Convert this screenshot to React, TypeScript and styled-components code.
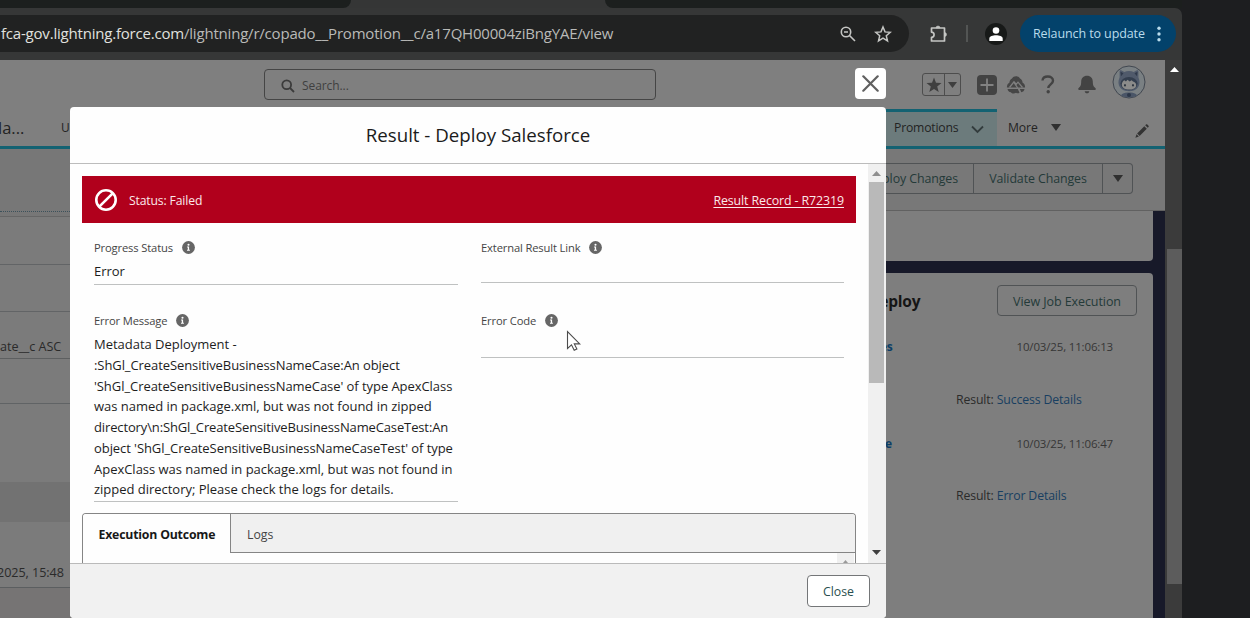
import React from "react";
import styled, { createGlobalStyle, css } from "styled-components";

const GlobalStyle = createGlobalStyle`
  * { box-sizing: border-box; }
  body { margin: 0; background: #1d1e20; font-family: "Open Sans", "Noto Sans", sans-serif; overflow: hidden; }
`;

const type = (size: number, spacing: number, line: number) => css`
  font-size: ${size}px;
  letter-spacing: ${spacing}px;
  line-height: ${line}px;
  white-space: pre;
`;

/* ---------- browser frame ---------- */
const Desktop = styled.div`
  position: relative;
  width: 1250px;
  height: 618px;
  overflow: hidden;
  background: #1d1e20;
`;
const BrowserWindow = styled.div`
  width: 1182px;
  height: 618px;
  display: flex;
  flex-direction: column;
`;
const TabStrip = styled.div`
  height: 8px;
  display: flex;
  justify-content: space-between;
  background: #353636;
`;
const InactiveTabs = styled.div<{ $width: number; $side: "left" | "right" }>`
  width: ${(p) => p.$width}px;
  height: 8px;
  background: #1c1f1e;
  border-radius: ${(p) => (p.$side === "left" ? "0 0 9px 0" : "0 0 0 9px")};
`;
const Toolbar = styled.div`
  height: 52px;
  padding-bottom: 1px;
  display: flex;
  align-items: center;
  background: #363737;
  border-radius: 0 7px 0 0;
`;
const AddressBar = styled.div`
  width: 909px;
  height: 37px;
  padding: 0 17px 0 1px;
  display: flex;
  align-items: center;
  background: #212222;
  border-radius: 0 19px 19px 0;
  svg { display: block; }
`;
const Url = styled.div`
  flex: 1;
  padding-bottom: 2px;
  ${type(15, -0.2, 20)}
  color: #b9bab8;
  b { font-weight: 400; color: #e0e1df; }
`;
const AddressIcons = styled.div`
  display: flex;
  gap: 17px;
`;
const ToolbarTail = styled.div`
  flex: 1;
  display: flex;
  align-items: center;
  padding-left: 19px;
  svg { display: block; }
`;
const Divider = styled.div`
  width: 2px;
  height: 17px;
  margin: 0 17px;
  background: #535554;
`;
const ProfileButton = styled.div`
  width: 22px;
  height: 22px;
  margin-right: 13px;
  border-radius: 50%;
  background: #171918;
`;
const RelaunchButton = styled.div`
  width: 156px;
  height: 37px;
  padding: 0 15px 0 13px;
  display: flex;
  align-items: center;
  justify-content: space-between;
  border-radius: 19px;
  background: #03426b;
  color: #b9dcec;
  ${type(12.5, -0.1, 18)}
`;

/* ---------- page behind the dialog ---------- */
const Viewport = styled.div`
  flex: 1;
  min-height: 0;
  display: flex;
`;
const Page = styled.div`
  width: 1165px;
  display: flex;
  flex-direction: column;
  background: #7f7f7f;
`;
const WindowScrollbar = styled.div`
  width: 17px;
  display: flex;
  flex-direction: column;
  align-items: center;
  background: #3b3b3b;
`;
const ScrollTop = styled.div`
  height: 189px;
  padding: 7px 0 0 1px;
  svg { display: block; }
`;
const ScrollThumb = styled.div`
  width: 15px;
  height: 335px;
  margin-left: 1px;
  background: #5c5c5c;
`;
const Header = styled.div`
  height: 49px;
  display: flex;
  padding-left: 264px;
`;
const SearchBox = styled.div`
  width: 392px;
  height: 31px;
  margin-top: 9px;
  padding: 2px 0 0 16px;
  display: flex;
  align-items: center;
  gap: 7px;
  border: 1px solid #454545;
  border-radius: 4px;
  color: #3f3f3f;
  ${type(12, -0.08, 18)}
`;
const HeaderActions = styled.div`
  display: flex;
  align-items: center;
  margin-left: 266px;
  svg { display: block; flex: none; }
`;
const FavoriteGroup = styled.div`
  display: flex;
  width: 39px;
  height: 23px;
  margin-right: 16px;
  border: 1px solid #4d4d4d;
  border-radius: 3px;
`;
const FavoriteCell = styled.div<{ $divider?: boolean }>`
  flex: ${(p) => (p.$divider ? "0 0 22px" : "1")};
  display: flex;
  align-items: center;
  justify-content: center;
  padding-top: 1px;
  border-right: ${(p) => (p.$divider ? "1px solid #4d4d4d" : "0")};
`;
const IconSlot = styled.div<{ $width: number }>`
  width: ${(p) => p.$width}px;
`;
const AvatarSlot = styled.div`
  padding: 0 0 5px 0;
`;
const NavBar = styled.div`
  height: 40px;
  display: flex;
  align-items: stretch;
  border-bottom: 3px solid #136272;
  color: #232323;
`;
const AppName = styled.div`
  width: 61px;
  padding-top: 7px;
  margin-left: -2px;
  margin-right: 2px;
  ${type(16.5, 0, 24)}
`;
const NavItem = styled.div<{ $width: number }>`
  width: ${(p) => p.$width}px;
  padding-top: 10px;
  ${type(12, 0, 18)}
`;
const ActiveNavItem = styled.div`
  width: 117px;
  padding: 7px 13px 0 14px;
  display: flex;
  justify-content: space-between;
  border-top: 3px solid #136272;
  background: #6c7b7c;
  ${type(12.2, -0.2, 18)}
  svg { margin-top: 6px; }
`;
const MoreItem = styled.div`
  flex: 1;
  display: flex;
  gap: 13px;
  padding: 10px 0 0 11px;
  ${type(12.2, -0.1, 18)}
  svg { margin-top: 5px; }
`;
const EditNav = styled.div`
  padding: 12px 16px 0 0;
`;
const Columns = styled.div`
  flex: 1;
  display: flex;
  min-height: 0;
`;
const ListColumn = styled.div`
  width: 880px;
  display: flex;
  flex-direction: column;
`;
const ListRow = styled.div<{ $height: number; $tone?: string; $line?: string; $dotted?: boolean; $pad?: number }>`
  flex: none;
  height: ${(p) => p.$height}px;
  display: flex;
  align-items: center;
  padding-top: ${(p) => p.$pad ?? 0}px;
  background: ${(p) => p.$tone ?? "#7b7b7b"};
  border-bottom: ${(p) => (p.$line ? `1px ${p.$dotted ? "dotted" : "solid"} ${p.$line}` : "0")};
  color: #2a2a2a;
  ${type(12.6, -0.05, 18)}
`;
const Clipped = styled.span`
  margin-left: -3px;
`;
const DetailColumn = styled.div`
  width: 285px;
  display: flex;
  flex-direction: column;
  background: #171929;
`;
const ActionBar = styled.div`
  height: 62px;
  padding-top: 14px;
  background: #787878;
  border-bottom: 1px solid #616161;
`;
const ButtonGroup = styled.div`
  width: 253px;
  height: 31px;
  display: flex;
  border: 1px solid #505355;
  border-left: 0;
  border-radius: 0 4px 4px 0;
`;
const GroupButton = styled.div<{ $width?: number; $end?: boolean }>`
  width: ${(p) => (p.$width ? `${p.$width}px` : "auto")};
  flex: ${(p) => (p.$width ? "none" : "1")};
  display: flex;
  align-items: center;
  justify-content: ${(p) => (p.$end ? "flex-end" : "center")};
  padding-right: ${(p) => (p.$end ? 15 : 0)}px;
  border-right: ${(p) => (p.$width ? "1px solid #505355" : "0")};
  color: #243a39;
  ${type(12.4, -0.1, 18)}
`;
const TopCard = styled.div`
  width: 273px;
  height: 50px;
  margin-bottom: 12px;
  border-radius: 0 0 4px 0;
  background: #7e7e7e;
`;
const JobCard = styled.div`
  width: 273px;
  flex: 1;
  padding: 12px 16px 0 0;
  border-radius: 0 4px 0 0;
  background: #7e7e7e;
`;
const JobHeader = styled.div`
  display: flex;
  justify-content: space-between;
  align-items: center;
`;
const JobTitle = styled.div`
  margin-left: -12px;
  padding-top: 1px;
  font-weight: 700;
  color: #151515;
  ${type(15.5, -0.2, 22)}
`;
const JobButton = styled.div`
  width: 140px;
  height: 31px;
  padding-top: 2px;
  display: flex;
  align-items: center;
  justify-content: center;
  border: 1px solid #505355;
  border-radius: 4px;
  color: #243a39;
  ${type(12.5, -0.08, 18)}
`;
const StepRow = styled.div<{ $top: number }>`
  display: flex;
  justify-content: space-between;
  margin-top: ${(p) => p.$top}px;
  padding-right: 24px;
  color: #363636;
  ${type(11.5, -0.16, 18)}
`;
const StepName = styled.b`
  color: #0d3e66;
  ${type(12, -0.3, 18)}
`;
const ResultRow = styled.div<{ $top: number }>`
  margin-top: ${(p) => p.$top}px;
  padding-left: 76px;
  display: flex;
  color: #2b2b2b;
  ${type(12.3, -0.14, 18)}
  a { color: #183f61; }
`;

/* ---------- dialog ---------- */
const CloseIcon = styled.div`
  position: absolute;
  left: 855px;
  top: 68px;
  width: 31px;
  height: 31px;
  padding: 0 1px 1px 0;
  display: flex;
  align-items: center;
  justify-content: center;
  background: #fff;
  border-radius: 4px;
`;
const Dialog = styled.div`
  position: absolute;
  left: 70px;
  top: 107px;
  width: 816px;
  height: 511px;
  display: flex;
  flex-direction: column;
  border-radius: 4px;
  overflow: hidden;
  background: #fefefe;
`;
const DialogHeader = styled.div`
  flex: none;
  height: 57px;
  display: flex;
  align-items: center;
  justify-content: center;
  border-bottom: 1px solid #bcbcbc;
  color: #1b1b1b;
  ${type(18.7, 0, 28)}
`;
const DialogBody = styled.div`
  flex: none;
  height: 399px;
  display: flex;
`;
const BodyContent = styled.div`
  width: 798px;
  padding: 12px 12px 0;
  display: flex;
  flex-direction: column;
`;
const BodyScrollbar = styled.div`
  width: 18px;
  padding: 7px 0 8px;
  display: flex;
  flex-direction: column;
  align-items: center;
  background: #f0f0f0;
  svg { display: block; margin-right: 1px; }
`;
const BodyThumb = styled.div`
  width: 15px;
  height: 201px;
  margin: 6px 1px auto 0;
  background: #b9b9b9;
`;
const StatusBanner = styled.div`
  height: 47px;
  padding: 0 12px;
  display: flex;
  align-items: center;
  background: #b1001c;
  color: #fbe9ea;
  svg { display: block; margin-right: 11px; }
`;
const StatusText = styled.span`
  padding-top: 2px;
  ${type(12.2, -0.15, 18)}
`;
const ResultLink = styled.a`
  margin-left: auto;
  padding-top: 2px;
  text-decoration: underline;
  text-underline-offset: 2px;
  ${type(12.4, -0.11, 18)}
`;
const Fields = styled.div`
  display: grid;
  grid-template-columns: 364px 363px;
  column-gap: 23px;
  padding: 15px 12px 0;
`;
const Field = styled.div<{ $height: number; $gap?: number }>`
  height: ${(p) => p.$height}px;
  margin-bottom: ${(p) => p.$gap ?? 0}px;
  border-bottom: 1px solid #bfc1c1;
`;
const FieldLabel = styled.div`
  display: flex;
  align-items: center;
  gap: 9px;
  height: 18px;
  color: #454545;
  svg { display: block; }
`;
const LabelText = styled.span`
  padding-top: 2px;
  ${type(11.2, -0.14, 18)}
`;
const FieldValue = styled.div`
  margin-top: 5px;
  color: #1d1d1d;
  ${type(13, -0.02, 20.75)}
`;
const Line = styled.div<{ $spacing?: number }>`
  letter-spacing: ${(p) => p.$spacing ?? -0.02}px;
`;
const Tabs = styled.div`
  flex: 1;
  margin-top: 11px;
  display: flex;
  flex-direction: column;
  border: 1px solid #858585;
  border-bottom: 0;
  border-radius: 4px 4px 0 0;
  overflow: hidden;
`;
const TabList = styled.div`
  height: 39px;
  display: flex;
`;
const Tab = styled.div<{ $active?: boolean }>`
  width: ${(p) => (p.$active ? "148px" : "auto")};
  flex: ${(p) => (p.$active ? "none" : "1")};
  padding: 12px 15px 0 ${(p) => (p.$active ? 15.5 : 16)}px;
  background: ${(p) => (p.$active ? "#fefefe" : "#f0f0f0")};
  border-right: ${(p) => (p.$active ? "1px solid #858585" : "0")};
  border-bottom: ${(p) => (p.$active ? "0" : "1px solid #858585")};
  color: ${(p) => (p.$active ? "#181818" : "#444")};
  font-weight: ${(p) => (p.$active ? 700 : 400)};
  ${type(12.3, 0, 18)}
  letter-spacing: ${(p) => (p.$active ? -0.2 : 0)}px;
`;
const TabPanel = styled.div`
  flex: 1;
  display: flex;
  justify-content: flex-end;
  padding-right: 1px;
`;
const PanelScrollbar = styled.div`
  width: 17px;
  display: flex;
  justify-content: center;
  align-items: flex-end;
  background: #f0f0f0;
`;
const DialogFooter = styled.div`
  flex: 1;
  padding: 11px 16px;
  display: flex;
  justify-content: flex-end;
  border-top: 1px solid #bababa;
  background: #f1f1f1;
`;
const CloseButton = styled.div`
  width: 63px;
  height: 32px;
  padding-top: 1px;
  display: flex;
  align-items: center;
  justify-content: center;
  border: 1px solid #747678;
  border-radius: 4px;
  background: #fff;
  color: #2a4f50;
  ${type(12.3, 0, 18)}
`;
const Pointer = styled.svg`
  position: absolute;
  left: 565px;
  top: 329px;
`;

const Triangle = ({ w, h, color, up }: { w: number; h: number; color: string; up?: boolean }) => (
  <svg width={w} height={h} viewBox="0 0 10 5" preserveAspectRatio="none">
    <path d={up ? "M0 5 5 0l5 5z" : "M0 0h10L5 5z"} fill={color} />
  </svg>
);

const InfoIcon = () => (
  <svg width="13" height="13" viewBox="0 0 13 13">
    <circle cx="6.5" cy="6.5" r="6.4" fill="#666" />
    <circle cx="6.5" cy="3.7" r="1.05" fill="#fff" />
    <path d="M5.1 5.6h2v3.1h.8v1H5v-1h.8V6.6h-.7z" fill="#fff" />
  </svg>
);

const Avatar = () => (
  <svg width="34" height="34" viewBox="0 0 34 34">
    <defs>
      <clipPath id="face"><circle cx="17" cy="17" r="15.6" /></clipPath>
    </defs>
    <circle cx="17" cy="17" r="16" fill="#7a8083" stroke="#414750" strokeWidth="1" />
    <g clipPath="url(#face)">
      <path d="M7.600 6.200c0-1.500 1.600-1.200 4.600.8 3-1.200 6.600-1.200 9.600 0 3-2 4.600-2.300 4.600-.8v6c3.500 8-1.400 14-9.400 14S4.100 20.200 7.600 12.200z" fill="#505a6b" />
      <path d="M8.500 6.800l3 1.500-2.500 3zM25.500 6.800l-3 1.500 2.500 3z" fill="#303a4b" />
      <ellipse cx="17" cy="18.600" rx="8.600" ry="6.600" fill="#333e4e" />
      <path d="M9.800 19.500c.2-2.300 1.400-3.600 2.600-4.200l1.500 1.300 1.700-1.900 2 1.800 2-1.300 1.400 1.400c1.600.6 3.200 1.600 3.200 3.300 0 3.300-3.200 4.700-7.200 4.700s-7.200-1.700-7.200-5.100z" fill="#8b8b8a" />
      <ellipse cx="13" cy="20.300" rx=".9" ry="1.200" fill="#2c343f" />
      <ellipse cx="21" cy="20.300" rx=".9" ry="1.200" fill="#2c343f" />
      <path d="M8 34c0-4.500 3-6.500 9-6.500s9 2 9 6.500z" fill="#4a5567" />
      <circle cx="17" cy="30" r="2" fill="#2c3748" />
    </g>
  </svg>
);

export default function App() {
  return (
    <Desktop>
      <GlobalStyle />
      <BrowserWindow>
        <TabStrip>
          <InactiveTabs $width={351} $side="left" />
          <InactiveTabs $width={577} $side="right" />
        </TabStrip>
        <Toolbar>
          <AddressBar>
            <Url><b>fca-gov.lightning.force.com</b>/lightning/r/copado__Promotion__c/a17QH00004ziBngYAE/view</Url>
            <AddressIcons>
              <svg width="18" height="18" viewBox="0 0 18 18" fill="none" stroke="#c5c6c4" strokeWidth="1.6">
                <circle cx="7" cy="7" r="4.700" />
                <path d="M10.500 10.500l5.500 5.500M5 7h4" />
              </svg>
              <svg width="18" height="18" viewBox="0 0 18 18" fill="none" stroke="#c5c6c4" strokeWidth="1.500">
                <path d="M9 2l2 4.900 5.300.4-4 3.500 1.200 5.200L9 13.200 4.500 16l1.200-5.200-4-3.500 5.300-.4z" />
              </svg>
            </AddressIcons>
          </AddressBar>
          <ToolbarTail>
            <svg width="21" height="20" viewBox="0 0 21 20" fill="none" stroke="#c5c6c4" strokeWidth="1.700">
              <path d="M3.500 4h13v13H3.500v-3.700c3.400 0 3.400-5.200 0-5.200z" strokeLinejoin="round" />
              <path d="M8 4a2 2 0 0 1 4 0zM16.500 8.500a2 2 0 0 1 0 4z" fill="#c5c6c4" strokeWidth=".6" />
            </svg>
            <Divider />
            <ProfileButton>
              <svg width="22" height="22" viewBox="0 0 22 22" fill="#fff">
                <circle cx="11" cy="7.500" r="3.300" />
                <path d="M4.300 18v-2.200c0-2.600 3.500-3.500 6.700-3.500s6.700.9 6.700 3.500V18z" />
              </svg>
            </ProfileButton>
            <RelaunchButton>
              Relaunch to update
              <svg width="4" height="16" viewBox="0 0 4 16" fill="#b9dcec">
                <circle cx="2" cy="2.200" r="1.700" /><circle cx="2" cy="8" r="1.700" /><circle cx="2" cy="13.800" r="1.700" />
              </svg>
            </RelaunchButton>
          </ToolbarTail>
        </Toolbar>

        <Viewport>
          <Page>
            <Header>
              <SearchBox>
                <svg width="14" height="14" viewBox="0 0 14 14" fill="none" stroke="#3b3b3b" strokeWidth="1.800">
                  <circle cx="5.700" cy="5.700" r="4.400" />
                  <path d="M9 9l4 4" />
                </svg>
                Search...
              </SearchBox>
              <HeaderActions>
                <FavoriteGroup>
                  <FavoriteCell $divider>
                    <svg width="16" height="16" viewBox="0 0 16 16" fill="#3f3f3f"><path d="M8 .5l2 5.300 5.500.2-4.300 3.500 1.500 5.500L8 11.900 3.300 15l1.500-5.500L.5 6l5.500-.2z" /></svg>
                  </FavoriteCell>
                  <FavoriteCell><Triangle w={9} h={6} color="#3f3f3f" /></FavoriteCell>
                </FavoriteGroup>
                <IconSlot $width={29}>
                  <svg width="20" height="20" viewBox="0 0 20 20">
                    <rect width="20" height="20" rx="4" fill="#434343" />
                    <path d="M10 3.500v13M3.500 10h13" stroke="#828282" strokeWidth="1.800" />
                  </svg>
                </IconSlot>
                <IconSlot $width={35}>
                  <svg width="20" height="18" viewBox="0 0 20 18">
                    <path d="M10 .3c2 0 3 .8 4 2.300 1.700.8 2.500 2.300 2.500 4 1.900 1 2.600 2.900 2.600 4.900H.9c0-2 .7-3.900 2.600-4.900 0-1.700.8-3.200 2.500-4C7 1.100 8 .3 10 .3zM1.500 13h10.300l1.700 3.700c-1 .8-2.300.8-3.500.1-1.700 1-4 1-5.200-.5-1.700 0-3-1.400-3.300-3.300zM13.800 13h4.700c-.4 1.800-1.300 3-3.200 3.200z" fill="#464646" />
                    <path d="M3.500 11.500l4.500-5.700 2.200 2.500L12 6.200l4.500 5.300M8 6.500l4 6" fill="none" stroke="#7f7f7f" strokeWidth="1.300" />
                  </svg>
                </IconSlot>
                <IconSlot $width={37}>
                  <svg width="14" height="19" viewBox="0 0 14 19">
                    <path d="M1.500 5.500C1.700 2.800 4 1.500 6.800 1.500c3 0 5.200 1.600 5.200 4.200 0 3.600-4.700 3.700-4.700 7.300" fill="none" stroke="#434343" strokeWidth="2.400" />
                    <circle cx="7.200" cy="16.800" r="1.700" fill="#434343" />
                  </svg>
                </IconSlot>
                <IconSlot $width={34}>
                  <svg width="18" height="19" viewBox="0 0 18 19" fill="#434343">
                    <path d="M9 .7c3.700 0 5.800 2.700 5.800 5.800 0 4 .9 5.100 2.700 6.700.8.800.4 1.800-.7 1.800H1.200c-1.100 0-1.500-1-.7-1.800 1.800-1.600 2.700-2.700 2.700-6.700C3.200 3.400 5.300.7 9 .7zM6.700 16.200h4.600c-.2 1.500-1.100 2.100-2.300 2.100s-2.100-.6-2.300-2.100z" />
                  </svg>
                </IconSlot>
                <AvatarSlot><Avatar /></AvatarSlot>
              </HeaderActions>
            </Header>
            <NavBar>
              <AppName>la...</AppName>
              <NavItem $width={819}>U</NavItem>
              <ActiveNavItem>
                Promotions
                <svg width="13" height="9" viewBox="0 0 13 9" fill="none" stroke="#333c3d" strokeWidth="1.800"><path d="M1 1.500l5.500 5.500L12 1.500" /></svg>
              </ActiveNavItem>
              <MoreItem><span>More</span><Triangle w={10} h={7} color="#303030" /></MoreItem>
              <EditNav>
                <svg width="14" height="14" viewBox="0 0 14 14" fill="#333"><path d="M9.300 2.200l2.500 2.500-7.200 7.200-2.500-2.500zM10.200 1.300l.8-.8c.4-.4.900-.4 1.300 0l1.200 1.200c.4.4.4.900 0 1.300l-.8.8zM1.500 10.200l2.400 2.400L.4 13.700z" /></svg>
              </EditNav>
            </NavBar>
            <Columns>
              <ListColumn>
                <ListRow $height={63} $tone="#777" $line="#3b515b" $dotted />
                <ListRow $height={5} $tone="#777" $line="#666" />
                <ListRow $height={48} $line="#626466" />
                <ListRow $height={47} $line="#626466" />
                <ListRow $height={47} $line="#5d5f60" $pad={24}>ate__c ASC</ListRow>
                <ListRow $height={45} $line="#606365" />
                <ListRow $height={78} />
                <ListRow $height={40} $tone="#727272" />
                <ListRow $height={66} $line="#5b5e60" $pad={37}><Clipped>2025, 15:48</Clipped></ListRow>
                <ListRow $height={30} $tone="#767474" />
              </ListColumn>
              <DetailColumn>
                <ActionBar>
                  <ButtonGroup>
                    <GroupButton $width={94} $end>Deploy Changes</GroupButton>
                    <GroupButton $width={129}>Validate Changes</GroupButton>
                    <GroupButton><Triangle w={10} h={7} color="#303030" /></GroupButton>
                  </ButtonGroup>
                </ActionBar>
                <TopCard />
                <JobCard>
                  <JobHeader>
                    <JobTitle>Deploy</JobTitle>
                    <JobButton>View Job Execution</JobButton>
                  </JobHeader>
                  <StepRow $top={22}><StepName>es</StepName>10/03/25, 11:06:13</StepRow>
                  <ResultRow $top={35}>Result: <a>Success Details</a></ResultRow>
                  <StepRow $top={26}><StepName>te</StepName>10/03/25, 11:06:47</StepRow>
                  <ResultRow $top={34}>Result: <a>Error Details</a></ResultRow>
                </JobCard>
              </DetailColumn>
            </Columns>
          </Page>
          <WindowScrollbar>
            <ScrollTop><Triangle w={9} h={5} color="#fff" up /></ScrollTop>
            <ScrollThumb />
          </WindowScrollbar>
        </Viewport>
      </BrowserWindow>

      <CloseIcon>
        <svg width="17" height="17" viewBox="0 0 17 17" stroke="#606060" strokeWidth="2.200" strokeLinecap="round"><path d="M1.300 1.300l14.400 14.400M15.700 1.300L1.300 15.700" /></svg>
      </CloseIcon>

      <Dialog>
        <DialogHeader>Result - Deploy Salesforce</DialogHeader>
        <DialogBody>
          <BodyContent>
            <StatusBanner>
              <svg width="24" height="24" viewBox="0 0 24 24" fill="none" stroke="#fff" strokeWidth="2.600"><circle cx="12" cy="12" r="9.700" /><path d="M5.300 18.700L18.700 5.300" /></svg>
              <StatusText>Status: Failed</StatusText>
              <ResultLink>Result Record - R72319</ResultLink>
            </StatusBanner>
            <Fields>
              <Field $height={47} $gap={26}>
                <FieldLabel><LabelText>Progress Status</LabelText><InfoIcon /></FieldLabel>
                <FieldValue>Error</FieldValue>
              </Field>
              <Field $height={45} $gap={28}>
                <FieldLabel><LabelText>External Result Link</LabelText><InfoIcon /></FieldLabel>
              </Field>
              <Field $height={191}>
                <FieldLabel><LabelText>Error Message</LabelText><InfoIcon /></FieldLabel>
                <FieldValue>
                  <Line>Metadata Deployment -</Line>
                  <Line $spacing={-0.08}>:ShGl_CreateSensitiveBusinessNameCase:An object</Line>
                  <Line $spacing={-0.06}>'ShGl_CreateSensitiveBusinessNameCase' of type ApexClass</Line>
                  <Line>was named in package.xml, but was not found in zipped</Line>
                  <Line $spacing={-0.13}>directory\n:ShGl_CreateSensitiveBusinessNameCaseTest:An</Line>
                  <Line $spacing={-0.07}>object 'ShGl_CreateSensitiveBusinessNameCaseTest' of type</Line>
                  <Line>ApexClass was named in package.xml, but was not found in</Line>
                  <Line>zipped directory; Please check the logs for details.</Line>
                </FieldValue>
              </Field>
              <Field $height={47}>
                <FieldLabel><LabelText>Error Code</LabelText><InfoIcon /></FieldLabel>
              </Field>
            </Fields>
            <Tabs>
              <TabList>
                <Tab $active>Execution Outcome</Tab>
                <Tab>Logs</Tab>
              </TabList>
              <TabPanel>
                <PanelScrollbar><Triangle w={5} h={3} color="#999" up /></PanelScrollbar>
              </TabPanel>
            </Tabs>
          </BodyContent>
          <BodyScrollbar>
            <Triangle w={9} h={5} color="#8f8f8f" up />
            <BodyThumb />
            <Triangle w={9} h={5} color="#404040" />
          </BodyScrollbar>
        </DialogBody>
        <DialogFooter><CloseButton>Close</CloseButton></DialogFooter>
      </Dialog>

      <Pointer width="18" height="24" viewBox="0 0 18 24">
        <path d="M2.500 2.500v17l4-3.700 2.700 5.400 2.700-1.300-2.600-5h5.400z" fill="#fff" stroke="#4c4c4c" strokeWidth="1.100" />
      </Pointer>
    </Desktop>
  );
}
